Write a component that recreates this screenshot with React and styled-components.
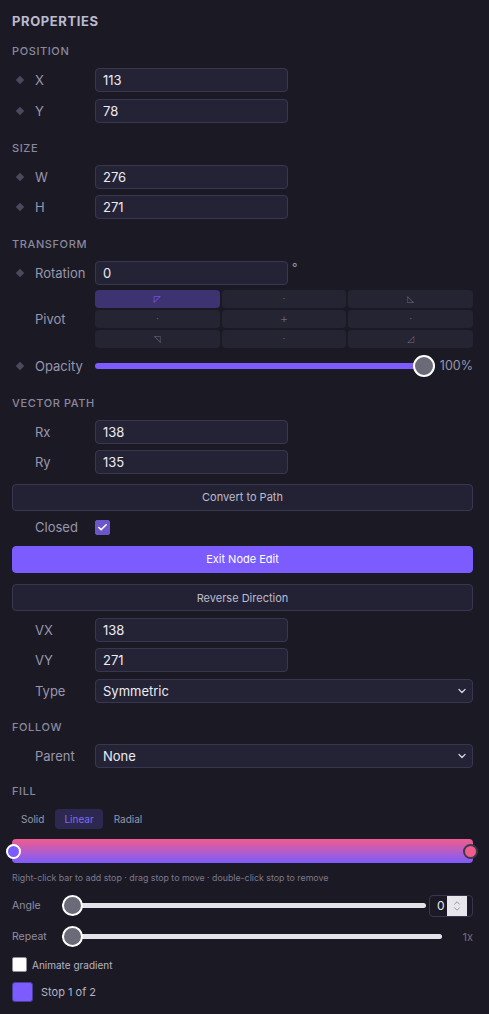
import React from 'react';
import styled, { createGlobalStyle, css } from 'styled-components';
import { ChevronDown, ChevronUp, Check } from 'lucide-react';

const GlobalStyle = createGlobalStyle`
  html, body {
    margin: 0;
    padding: 0;
    background: #1b1a24;
  }
  * {
    box-sizing: border-box;
  }
`;

const Panel = styled.div`
  width: 489px;
  min-height: 1014px;
  background: #1b1a24;
  padding: 12px 16px 12px 12px;
  font-family: Inter, 'Noto Sans', sans-serif;
  color: #e6e4f0;
  display: flex;
  flex-direction: column;
`;

const Title = styled.h1`
  margin: 0;
  font-size: 13px;
  line-height: 18px;
  font-weight: 700;
  letter-spacing: 0.6px;
  color: #bcbad0;
`;

const Section = styled.section`
  display: flex;
  flex-direction: column;
  gap: ${p => (p.$flat ? 0 : 6.5)}px;
  margin-top: ${p => p.$top || 18}px;
`;

const Header = styled.h2`
  margin: 0 0 3.5px;
  font-size: 11px;
  line-height: 14px;
  font-weight: 500;
  letter-spacing: 0.6px;
  color: #8a889f;
`;

const Row = styled.div`
  display: flex;
  align-items: center;
  height: 24px;
  margin-top: ${p => p.$mt || 0}px;
`;

const LabelCell = styled.div`
  width: 83px;
  flex: none;
  display: flex;
  align-items: center;
  font-size: 13px;
  color: #9896ad;
`;

const Diamond = styled.span`
  width: 23px;
  flex: none;
  display: flex;
  justify-content: flex-start;
  padding-left: 5px;
  &::before {
    content: '';
    display: block;
    width: 6px;
    height: 6px;
    background: ${p => (p.$show ? '#4b495e' : 'transparent')};
    transform: rotate(45deg);
  }
`;

const fieldBox = css`
  height: 24px;
  background: #242335;
  border: 1px solid #393750;
  border-radius: 4px;
  color: #ecebf3;
  font-family: inherit;
  font-size: 13px;
  padding: 0 7px;
`;

const NumInput = styled.input`
  ${fieldBox};
  width: 193px;
  outline: none;
`;

const Unit = styled.span`
  font-size: 12px;
  color: #9896ad;
  margin-left: 4px;
  align-self: flex-start;
  line-height: 14px;
`;

const Select = styled.div`
  ${fieldBox};
  flex: 1;
  display: flex;
  align-items: center;
  justify-content: space-between;
  padding-right: 4px;
  svg {
    color: #d6d4e2;
  }
`;

const PivotRow = styled.div`
  display: flex;
  align-items: center;
  margin-top: -1.5px;
`;

const PivotGrid = styled.div`
  flex: 1;
  display: grid;
  grid-template-columns: repeat(3, 1fr);
  grid-auto-rows: 18px;
  gap: 2px;
`;

const PivotCell = styled.div`
  border-radius: 4px;
  background: ${p => (p.$active ? '#3c3370' : '#252433')};
  color: ${p => (p.$active ? '#7c5cff' : '#6c6a80')};
  display: flex;
  align-items: center;
  justify-content: center;
  font-size: 9px;
  line-height: 1;
  font-family: 'DejaVu Sans', sans-serif;
`;

const Range = styled.input.attrs({ type: 'range' })`
  -webkit-appearance: none;
  appearance: none;
  flex: 1;
  margin: 0;
  height: 24px;
  background: transparent;
  outline: none;
  &::-webkit-slider-runnable-track {
    height: ${p => (p.$accent ? 6 : 5)}px;
    border-radius: 3px;
    background: ${p => (p.$accent ? '#7c5cff' : '#e4e3ea')};
  }
  &::-webkit-slider-thumb {
    -webkit-appearance: none;
    width: ${p => (p.$accent ? 22 : 21)}px;
    height: ${p => (p.$accent ? 22 : 21)}px;
    border-radius: 50%;
    background: #6b6a78;
    border: 2px solid #ffffff;
    margin-top: -8px;
  }
`;

const SideValue = styled.span`
  font-size: ${p => (p.$dim ? 11 : 12.5)}px;
  color: ${p => (p.$dim ? '#6f6d85' : '#9896ad')};
  width: ${p => p.$w}px;
  text-align: right;
  flex: none;
`;

const WideButton = styled.button`
  width: 100%;
  height: 27px;
  border-radius: 4px;
  border: 1px solid ${p => (p.$primary ? '#7c5cff' : '#393750')};
  background: ${p => (p.$primary ? '#7c5cff' : '#232235')};
  color: ${p => (p.$primary ? '#ffffff' : '#bebccd')};
  font-family: inherit;
  font-size: 11px;
  cursor: pointer;
  margin-top: ${p => p.$mt || 0}px;
`;

const CheckBox = styled.span`
  width: 15px;
  height: 15px;
  border-radius: 2px;
  flex: none;
  display: flex;
  align-items: center;
  justify-content: center;
  background: ${p => (p.$checked ? '#6d56c9' : '#ffffff')};
  border: 1px solid ${p => (p.$checked ? '#6d56c9' : '#8f8da0')};
  color: #ffffff;
`;

const Tabs = styled.div`
  display: flex;
  gap: 2px;
  margin-top: 7.5px;
`;

const Tab = styled.button`
  height: 20px;
  padding: 0 9px;
  border: none;
  border-radius: 4px;
  background: ${p => (p.$active ? '#2c2850' : 'transparent')};
  color: ${p => (p.$active ? '#7c6cf2' : '#9896ad')};
  font-family: inherit;
  font-size: 10px;
`;

const GradientWrap = styled.div`
  position: relative;
  height: 24px;
  margin-top: 10px;
`;

const GradientBar = styled.div`
  height: 24px;
  border-radius: 4px;
  background: linear-gradient(0deg, #7c5cff 0%, #f25c8c 100%);
`;

const Stop = styled.span`
  position: absolute;
  top: 5px;
  width: 15px;
  height: 15px;
  border-radius: 50%;
  background: ${p => p.$color};
  border: 2px solid ${p => (p.$selected ? '#ffffff' : '#3b3a47')};
  ${p => (p.$side === 'left' ? 'left: -6px;' : 'right: -5px;')}
`;

const Hint = styled.p`
  margin: 9px 0 0;
  font-size: 8.8px;
  line-height: 12px;
  color: #7b798e;
`;

const FillLabel = styled.span`
  width: 50px;
  flex: none;
  font-size: 10.5px;
  color: #8f8da3;
`;

const SpinBox = styled.div`
  width: 44px;
  height: 22px;
  margin-left: 3px;
  flex: none;
  border: 1px solid #393750;
  border-radius: 4px;
  display: flex;
  align-items: center;
  padding-left: 7px;
  font-size: 12px;
  color: #e6e4f0;
  justify-content: space-between;
`;

const Spinner = styled.span`
  width: 20px;
  height: 20px;
  background: #e7e6ed;
  display: flex;
  flex-direction: column;
  align-items: center;
  justify-content: center;
  color: #8a8898;
  margin-right: 5px;
  svg {
    margin: -2px 0;
  }
`;

const CheckRow = styled.label`
  display: flex;
  align-items: center;
  gap: 5px;
  font-size: 10px;
  color: #b5b3c6;
  margin-top: ${p => p.$mt || 0}px;
`;

const Swatch = styled.span`
  width: 21px;
  height: 20px;
  border-radius: 3px;
  border: 1px solid #4a3e9a;
  background: #7c5cff;
  flex: none;
`;

const StopRow = styled.div`
  display: flex;
  align-items: center;
  gap: 8px;
  font-size: 11px;
  color: #b5b3c6;
  margin-top: 9.5px;
`;

function Field({ label, value, keyed = true, unit }) {
  return (
    <Row>
      <LabelCell>
        <Diamond $show={keyed} />
        {label}
      </LabelCell>
      <NumInput defaultValue={value} />
      {unit && <Unit>{unit}</Unit>}
    </Row>
  );
}

function SelectField({ label, value }) {
  return (
    <Row>
      <LabelCell>
        <Diamond />
        {label}
      </LabelCell>
      <Select>
        {value}
        <ChevronDown size={12} strokeWidth={2.5} />
      </Select>
    </Row>
  );
}

const pivots = ['◸', '·', '◺', '·', '+', '·', '◹', '·', '◿'];

export default function App() {
  return (
    <Panel>
      <GlobalStyle />
      <Title>PROPERTIES</Title>

      <Section $top={14}>
        <Header>POSITION</Header>
        <Field label="X" value="113" />
        <Field label="Y" value="78" />
      </Section>

      <Section>
        <Header>SIZE</Header>
        <Field label="W" value="276" />
        <Field label="H" value="271" />
      </Section>

      <Section>
        <Header>TRANSFORM</Header>
        <Field label="Rotation" value="0" unit="°" />
        <PivotRow>
          <LabelCell>
            <Diamond />
            Pivot
          </LabelCell>
          <PivotGrid>
            {pivots.map((g, i) => (
              <PivotCell key={i} $active={i === 0}>
                {g}
              </PivotCell>
            ))}
          </PivotGrid>
        </PivotRow>
        <Row $mt={-1}>
          <LabelCell>
            <Diamond $show />
            Opacity
          </LabelCell>
          <Range $accent defaultValue={100} min={0} max={100} />
          <SideValue $w={38}>100%</SideValue>
        </Row>
      </Section>

      <Section>
        <Header>VECTOR PATH</Header>
        <Field label="Rx" value="138" keyed={false} />
        <Field label="Ry" value="135" keyed={false} />
        <WideButton $mt={3}>Convert to Path</WideButton>
        <Row $mt={-2}>
          <LabelCell>
            <Diamond />
            Closed
          </LabelCell>
          <CheckBox $checked>
            <Check size={11} strokeWidth={3.5} />
          </CheckBox>
        </Row>
        <WideButton $primary $mt={0}>Exit Node Edit</WideButton>
        <WideButton $mt={5}>Reverse Direction</WideButton>
        <Field label="VX" value="138" keyed={false} />
        <Field label="VY" value="271" keyed={false} />
        <SelectField label="Type" value="Symmetric" />
      </Section>

      <Section $top={17}>
        <Header>FOLLOW</Header>
        <SelectField label="Parent" value="None" />
      </Section>

      <Section $top={16} $flat>
        <Header>FILL</Header>
        <Tabs>
          <Tab>Solid</Tab>
          <Tab $active>Linear</Tab>
          <Tab>Radial</Tab>
        </Tabs>
        <GradientWrap>
          <GradientBar />
          <Stop $side="left" $color="#7c5cff" $selected />
          <Stop $side="right" $color="#f25c8c" />
        </GradientWrap>
        <Hint>Right-click bar to add stop · drag stop to move · double-click stop to remove</Hint>
        <Row $mt={10}>
          <FillLabel>Angle</FillLabel>
          <Range defaultValue={0} min={0} max={360} />
          <SpinBox>
            0
            <Spinner>
              <ChevronUp size={10} strokeWidth={2} />
              <ChevronDown size={10} strokeWidth={2} />
            </Spinner>
          </SpinBox>
        </Row>
        <Row $mt={7}>
          <FillLabel>Repeat</FillLabel>
          <Range defaultValue={1} min={1} max={10} />
          <SideValue $w={31} $dim>1x</SideValue>
        </Row>
        <CheckRow $mt={8.5}>
          <CheckBox />
          Animate gradient
        </CheckRow>
        <StopRow>
          <Swatch />
          Stop 1 of 2
        </StopRow>
      </Section>
    </Panel>
  );
}
